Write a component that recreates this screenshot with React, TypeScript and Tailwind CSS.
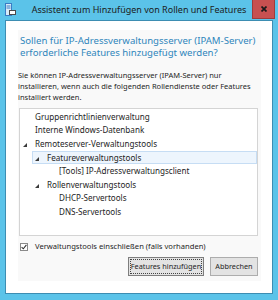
import React from "react";

type Row = { label: string; level: number; expanded?: boolean; selected?: boolean };

const rows: Row[] = [
  { label: "Gruppenrichtlinienverwaltung", level: 0 },
  { label: "Interne Windows-Datenbank", level: 0 },
  { label: "Remoteserver-Verwaltungstools", level: 0, expanded: true },
  { label: "Featureverwaltungstools", level: 1, expanded: true, selected: true },
  { label: "[Tools] IP-Adressverwaltungsclient", level: 2 },
  { label: "Rollenverwaltungstools", level: 1, expanded: true },
  { label: "DHCP-Servertools", level: 2 },
  { label: "DNS-Servertools", level: 2 },
];

const indent = ["ml-0", "ml-[12px]", "ml-[24px]"];

const AppIcon = () => (
  <svg width="11" height="13" viewBox="0 0 11 13">
    <rect x="0.5" y="0.5" width="6" height="12" fill="#d9ebf8" stroke="#3b7cc4" />
    <line x1="1.5" y1="3" x2="5.5" y2="3" stroke="#3b7cc4" />
    <line x1="1.5" y1="5" x2="5.5" y2="5" stroke="#3b7cc4" />
    <rect x="4.5" y="7.5" width="6" height="4" fill="#ffffff" stroke="#4a4a4a" />
  </svg>
);

const Expander = () => (
  <svg width="4" height="4" viewBox="0 0 4 4" className="ml-[2px] mt-[3px]">
    <polygon points="4,0 4,4 0,4" fill="#3a3a3a" />
  </svg>
);

export default function App() {
  return (
    <div className="w-[278px] h-[300px] bg-[#5bc3e9] flex flex-col px-[5px] pb-[6px] font-['Noto_Sans',sans-serif] text-[#1e1e1e]">
      {/* title bar */}
      <div className="-mx-[5px] h-[20px] grid grid-cols-[1fr_auto_1fr] items-start">
        <div className="pl-[5px] pt-[3px]">
          <AppIcon />
        </div>
        <div className="text-[9px] leading-[20px] whitespace-nowrap text-[#1b1b1b]">
          Assistent zum Hinzufügen von Rollen und Features
        </div>
        <div className="flex justify-end pr-[3px]">
          <div className="w-[23px] h-[19px] bg-[#c75050] border border-[#9e3b3b] border-t-0 flex items-center justify-center">
            <svg width="6" height="6" viewBox="0 0 6 6">
              <path d="M0.5 0.5 L5.5 5.5 M5.5 0.5 L0.5 5.5" stroke="#1a1a1a" strokeWidth="1.7" />
            </svg>
          </div>
        </div>
      </div>

      {/* client area */}
      <div className="flex-1 border border-[#3d8db2] bg-white flex flex-col">
        <div className="flex-1 mt-[9px] ml-[12px] mr-[11px] mb-[12px] bg-[#f9f9f9] flex flex-col">
          <div className="pl-[2px] pt-[5px] text-[9.6px] leading-[12px] text-[#2f86bc] whitespace-nowrap">
            Sollen für IP-Adressverwaltungsserver (IPAM-Server)
            <br />
            erforderliche Features hinzugefügt werden?
          </div>

          <div className="mt-[11px] text-[7.5px] leading-[11px] whitespace-nowrap text-[#1e1e1e]">
            Sie können IP-Adressverwaltungsserver (IPAM-Server) nur
            <br />
            installieren, wenn auch die folgenden Rollendienste oder Features
            <br />
            installiert werden.
          </div>

          <div className="mt-[5px] ml-[1px] mr-[3px] h-[128px] border border-[#d4d4d4] bg-white pt-[1px]">
            {rows.map((r) => (
              <div
                key={r.label}
                className={
                  "h-[13.6px] flex items-center border " +
                  indent[r.level] +
                  (r.selected ? " bg-[#edf5fd] border-[#c6ddf4]" : " border-transparent")
                }
              >
                <div className="w-[14px] h-full flex items-center">{r.expanded && <Expander />}</div>
                <span className="text-[8.1px] whitespace-nowrap text-[#1e1e1e]">{r.label}</span>
              </div>
            ))}
          </div>

          <div className="mt-[5px] ml-[2px] h-[11px] flex items-center gap-[7px]">
            <div className="w-[8px] h-[8px] border border-[#8a8a8a] bg-white flex items-center justify-center">
              <svg width="6" height="6" viewBox="0 0 6 6">
                <path d="M0.6 3.2 L2.3 4.8 L5.4 0.9" fill="none" stroke="#333" strokeWidth="1.1" />
              </svg>
            </div>
            <span className="text-[7.6px] whitespace-nowrap text-[#1e1e1e]">
              Verwaltungstools einschließen (falls vorhanden)
            </span>
          </div>

          <div className="mt-[5px] mr-[3px] flex justify-end gap-[6px]">
            <button className="w-[76px] h-[19px] bg-[#e3e3e3] border border-[#7d7d7d] outline-1 outline-dotted outline-[#444] outline-offset-[-3px] text-[7.3px] text-[#1e1e1e] whitespace-nowrap">
              Features hinzufügen
            </button>
            <button className="w-[48px] h-[19px] bg-[#e3e3e3] border border-[#adadad] text-[7.3px] text-[#1e1e1e] whitespace-nowrap">
              Abbrechen
            </button>
          </div>
        </div>
      </div>
    </div>
  );
}
